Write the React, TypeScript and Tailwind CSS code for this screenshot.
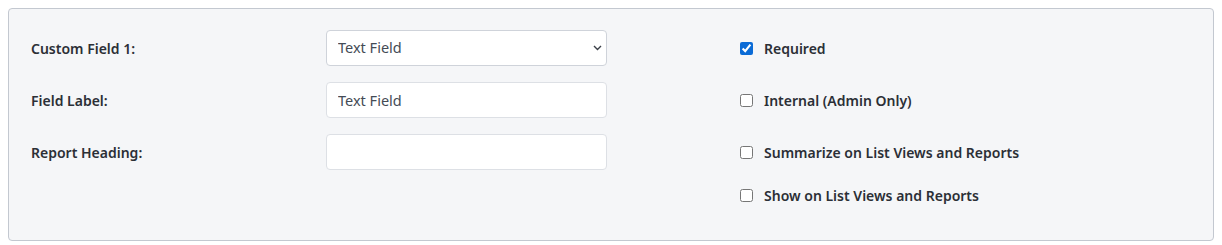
import React from 'react';

const rows = [
    { label: 'Custom Field 1:', kind: 'select', value: 'Text Field' },
    { label: 'Field Label:', kind: 'input', value: 'Text Field' },
    { label: 'Report Heading:', kind: 'input', value: '' },
];

const options = [
    { label: 'Required', checked: true },
    { label: 'Internal (Admin Only)', checked: false },
    { label: 'Summarize on List Views and Reports', checked: false },
    { label: 'Show on List Views and Reports', checked: false },
];

export default function App() {
    return (
        <div
            className="p-2 bg-white"
            style={{ fontFamily: '"Noto Sans", "Open Sans", sans-serif' }}
        >
            <div className="flex h-[233px] rounded border border-[#c3c8d0] bg-[#f5f6f8] pl-[22px] pt-[21px]">
                <div className="flex flex-col gap-4">
                    {rows.map((row) => (
                        <div key={row.label} className="flex items-center h-9">
                            <label className="w-[295px] pt-px text-[14px] font-semibold text-[#2b2f36]">
                                {row.label}
                            </label>
                            {row.kind === 'select' ? (
                                <div className="relative w-[281px]">
                                    <select
                                        defaultValue={row.value}
                                        className="w-full h-9 appearance-none rounded border border-[#cfd3da] bg-white pl-[11px] text-[14.5px] text-[#444b55] outline-none"
                                    >
                                        <option>Text Field</option>
                                        <option>Dropdown</option>
                                        <option>Checkbox</option>
                                    </select>
                                    <svg
                                        className="absolute right-[5px] top-[15px]"
                                        width="9"
                                        height="6"
                                        viewBox="0 0 9 6"
                                        fill="none"
                                    >
                                        <path d="M1 1l3.5 3.5L8 1" stroke="#3b4048" strokeWidth="1.4" />
                                    </svg>
                                </div>
                            ) : (
                                <input
                                    defaultValue={row.value}
                                    className="w-[281px] h-9 rounded border border-[#dde0e5] bg-white pl-[11px] text-[14.5px] text-[#444b55] outline-none"
                                />
                            )}
                        </div>
                    ))}
                </div>
                <div className="ml-[133px] flex flex-col">
                    {options.map((opt, i) => (
                        <label
                            key={opt.label}
                            className={
                                'flex items-center gap-[11px] ' +
                                (i === 3 ? 'h-5 mt-[15px]' : i === 2 ? 'h-9' : 'h-9 mb-4')
                            }
                        >
                            <input
                                type="checkbox"
                                defaultChecked={opt.checked}
                                className="m-0 w-[13px] h-[13px] accent-[#0b6bd6]"
                            />
                            <span className="pt-px text-[14px] font-semibold text-[#2b2f36]">
                                {opt.label}
                            </span>
                        </label>
                    ))}
                </div>
            </div>
        </div>
    );
}
